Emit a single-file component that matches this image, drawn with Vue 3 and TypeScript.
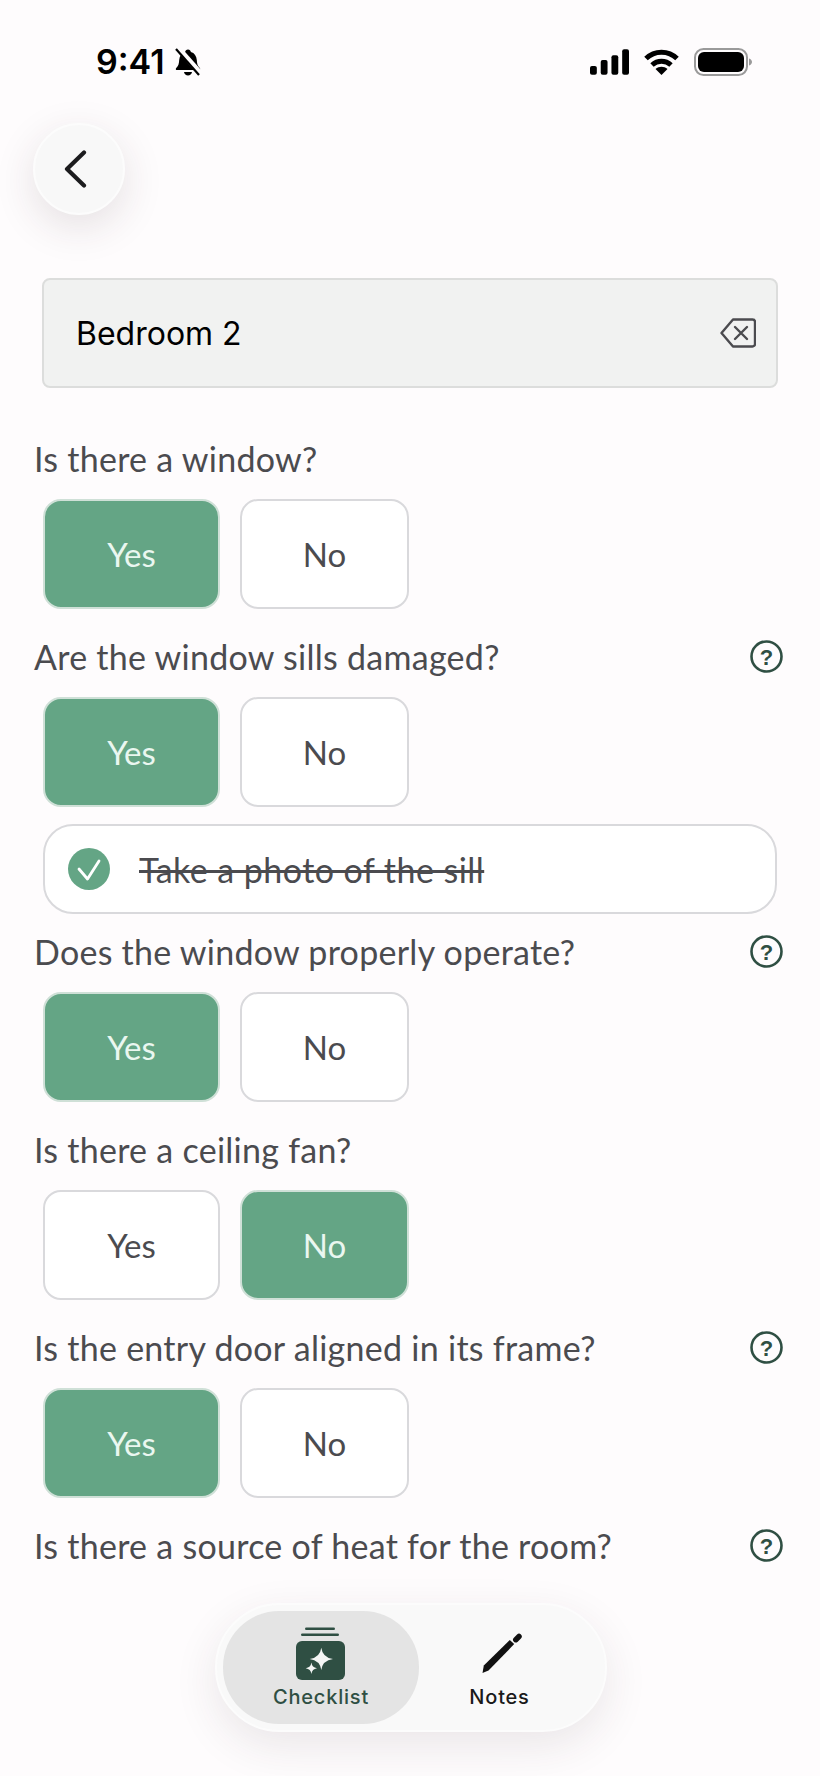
<script setup lang="ts">
interface Question {
  label: string
  answer: 'yes' | 'no' | null
  help: boolean
  task?: string
}

const questions: Question[] = [
  { label: 'Is there a window?', answer: 'yes', help: false },
  { label: 'Are the window sills damaged?', answer: 'yes', help: true, task: 'Take a photo of the sill' },
  { label: 'Does the window properly operate?', answer: 'yes', help: true },
  { label: 'Is there a ceiling fan?', answer: 'no', help: false },
  { label: 'Is the entry door aligned in its frame?', answer: 'yes', help: true },
  { label: 'Is there a source of heat for the room?', answer: null, help: true },
]
</script>

<template>
  <div class="screen">
    <header class="status-bar">
      <div class="status-left">
        <span class="time">9:41</span>
        <svg class="bell" viewBox="0 0 28 28" fill="none">
          <path d="M14 1.500c1.600 0 2.600 1 2.900 2.400 3.600 1 5.600 4 5.900 8 .2 3.400.6 5.600 3 8 .8.9.4 2.100-.9 2.100H3.100c-1.300 0-1.700-1.200-.9-2.100 2.400-2.400 2.800-4.600 3-8 .3-4 2.300-7 5.900-8C11.400 2.500 12.400 1.500 14 1.500z" fill="#000"/>
          <path d="M10 24h8c-.3 2-2 3.500-4 3.500S10.300 26 10 24z" fill="#000"/>
          <path d="M3.500 -.5l24 27" stroke="#fefcfd" stroke-width="5.500"/>
          <path d="M2 1l23 26" stroke="#000" stroke-width="2.200"/>
        </svg>
      </div>
      <div class="status-right">
        <svg class="signal" viewBox="0 0 40 26" fill="#000">
          <rect x="0" y="17" width="7" height="9" rx="2"/>
          <rect x="11" y="11" width="7" height="15" rx="2"/>
          <rect x="22" y="6" width="7" height="20" rx="2"/>
          <rect x="33" y="0" width="7" height="26" rx="2"/>
        </svg>
        <svg class="wifi" viewBox="0 0 35 26" fill="none" stroke="#000" stroke-width="5">
          <path d="M2 9.500C10.500 1 24.500 1 33 9.500"/>
          <path d="M8 16c5.500-5 13.500-5 19 0"/>
          <path d="M17.500 26l-6-6c3.500-3 8.500-3 12 0z" fill="#000" stroke="none"/>
        </svg>
        <svg class="battery" viewBox="0 0 58 28" fill="none">
          <rect x="1" y="1" width="52" height="26" rx="8.500" stroke="#9a9a9a" stroke-width="2"/>
          <rect x="4" y="4" width="46" height="20" rx="6" fill="#000"/>
          <path d="M55 10.500c2 .6 3 2 3 3.500s-1 2.900-3 3.500z" fill="#9a9a9a"/>
        </svg>
      </div>
    </header>

    <button class="back-btn" type="button">
      <svg viewBox="0 0 24 38" fill="none">
        <path d="M21 2.500L4 19l17 16.500" stroke="#1c1c1e" stroke-width="4.200" stroke-linecap="round" stroke-linejoin="round"/>
      </svg>
    </button>

    <main class="content">
      <div class="name-field">
        <span class="name-value">Bedroom 2</span>
        <svg class="clear-icon" viewBox="0 0 36 30" fill="none" stroke="#4b4b4f" stroke-width="2.400" stroke-linejoin="round" stroke-linecap="round">
          <path d="M13 1.500h19.500a2.500 2.500 0 0 1 2.500 2.500v22a2.500 2.500 0 0 1-2.500 2.500H13L1.500 15z"/>
          <path d="M15 9l12 12M27 9L15 21"/>
        </svg>
      </div>

      <section v-for="q in questions" :key="q.label" class="question" :class="{ 'has-task': q.task }">
        <div class="question-row">
          <span class="question-label">{{ q.label }}</span>
          <svg v-if="q.help" class="help-icon" viewBox="0 0 33 33" fill="none">
            <circle cx="16.500" cy="16.500" r="15" stroke="#2f4f43" stroke-width="2.600"/>
            <text x="16.500" y="24.500" text-anchor="middle" class="help-mark">?</text>
          </svg>
        </div>
        <div v-if="q.answer" class="answers">
          <button type="button" class="answer answer-yes" :class="{ selected: q.answer === 'yes' }">Yes</button>
          <button type="button" class="answer answer-no" :class="{ selected: q.answer === 'no' }">No</button>
        </div>
        <div v-if="q.task" class="task">
          <svg class="task-check" viewBox="0 0 42 42" fill="none">
            <circle cx="21" cy="21" r="21" fill="#64a585"/>
            <path d="M11 21l8.500 10L31 13" stroke="#fff" stroke-width="2.800" stroke-linecap="round" stroke-linejoin="round"/>
          </svg>
          <span class="task-label">{{ q.task }}</span>
        </div>
      </section>
    </main>

    <nav class="tab-bar">
      <div class="tab active">
        <svg class="tab-icon" viewBox="0 0 50 54" fill="none">
          <rect x="9" y="0.500" width="30" height="2.600" rx="1.300" fill="#2f4f43"/>
          <rect x="5" y="6.500" width="38" height="2.600" rx="1.300" fill="#2f4f43"/>
          <rect x="0" y="14" width="49" height="39" rx="6" fill="#2f4f43"/>
          <path d="M25.300 20.700Q26.500 30.500 37 32Q26.500 33.500 25.300 43Q24 33.500 13.700 32Q24 30.500 25.300 20.700z" fill="#f4f6f5"/>
          <path d="M15.400 35.500Q16 40.500 21 41.200Q16 42 15.400 47Q14.800 42 9.700 41.200Q14.800 40.500 15.400 35.500z" fill="#f4f6f5" stroke="#2f4f43" stroke-width="1.200" paint-order="stroke"/>
        </svg>
        <span class="tab-label">Checklist</span>
      </div>
      <div class="tab tab-notes">
        <svg class="tab-icon" viewBox="0 0 50 54" fill="none">
          <path d="M7.500 46L8.800 38.500 34.800 12.900 39.200 17.100 13.500 43.500z" fill="#111"/>
          <path d="M40.800 12.700L44 9.500" stroke="#111" stroke-width="5.500" stroke-linecap="round"/>
        </svg>
        <span class="tab-label">Notes</span>
      </div>
    </nav>
  </div>
</template>

<style>
html,
body {
  margin: 0;
  background: #fefcfd;
}
</style>

<style scoped>
.screen {
  position: relative;
  width: 820px;
  height: 1776px;
  overflow: hidden;
  background: #fefcfd;
  font-family: "Lato", "Noto Sans", sans-serif;
}

.status-bar {
  display: flex;
  justify-content: space-between;
  align-items: center;
  height: 28px;
  padding: 48px 68px 0 96px;
}

.status-left,
.status-right {
  display: flex;
  align-items: center;
}

.time {
  font-family: "Inter", sans-serif;
  font-size: 34px;
  font-weight: 600;
  line-height: 28px;
  color: #000;
}

.bell {
  width: 28px;
  height: 28px;
  margin-left: 9px;
}

.status-right {
  gap: 15px;
}

.signal {
  width: 39px;
  height: 26px;
}

.wifi {
  width: 35px;
  height: 26px;
}

.battery {
  width: 58px;
  height: 28px;
}

.back-btn {
  display: flex;
  align-items: center;
  justify-content: center;
  width: 92px;
  height: 92px;
  margin: 47px 0 0 33px;
  padding: 0 8px 0 0;
  background: #f8f8f8;
  border: 2px solid #fcfcfc;
  border-radius: 50%;
  box-shadow: 0 12px 40px rgba(60, 40, 50, 0.13);
}

.back-btn svg {
  width: 24px;
  height: 38px;
}

.content {
  padding: 63px 37px 0 34px;
}

.name-field {
  display: flex;
  align-items: center;
  justify-content: space-between;
  height: 106px;
  margin: 0 5px 0 8px;
  padding: 0 20px 0 32px;
  background: #f1f2f1;
  border: 2px solid #dcdddc;
  border-radius: 8px;
}

.name-value {
  font-family: "Inter", sans-serif;
  font-size: 32px;
  color: #000;
}

.clear-icon {
  width: 36px;
  height: 30px;
}

.question-row {
  display: flex;
  align-items: center;
  justify-content: space-between;
  height: 40px;
  padding-top: 27px;
  padding-bottom: 21px;
}

.question:first-of-type .question-row {
  padding-top: 50px;
}

.has-task + .question .question-row {
  padding-top: 17px;
}

.question-label {
  font-size: 34px;
  letter-spacing: 0.27px;
  color: #4b4b4f;
  white-space: nowrap;
}

.help-icon {
  width: 33px;
  height: 33px;
}

.help-mark {
  font-family: "Liberation Sans", sans-serif;
  font-size: 22px;
  font-weight: 700;
  fill: #2f4f43;
}

.answers {
  display: flex;
  gap: 20px;
  margin-left: 9px;
}

.answer {
  height: 110px;
  padding: 0;
  font-family: inherit;
  font-size: 33px;
  color: #4b4b4f;
  background: #fff;
  border: 2px solid #d9d9dc;
  border-radius: 18px;
}

.answer-yes {
  width: 177px;
}

.answer-no {
  width: 169px;
}

.answer.selected {
  color: #eaf7f0;
  background: #64a585;
  border-color: #cfe0d7;
}

.task {
  display: flex;
  align-items: center;
  gap: 29px;
  height: 86px;
  margin: 17px 6px 0 9px;
  padding-left: 23px;
  background: #fff;
  border: 2px solid #d9d9dc;
  border-radius: 30px;
}

.task-check {
  width: 42px;
  height: 42px;
}

.task-label {
  font-size: 34px;
  letter-spacing: 0.45px;
  color: #4b4b4f;
  text-decoration: line-through;
}

.tab-bar {
  position: absolute;
  left: 215px;
  top: 1603px;
  display: flex;
  box-sizing: border-box;
  width: 392px;
  height: 129px;
  padding: 6px;
  background: #f9f9f9;
  border: 2px solid #fcfcfc;
  border-radius: 65px;
  box-shadow: 0 14px 44px rgba(60, 40, 50, 0.1);
}

.tab {
  display: flex;
  flex-direction: column;
  align-items: center;
  justify-content: center;
  gap: 4px;
  border-radius: 56px;
}

.tab.active {
  width: 196px;
  background: #e4e4e4;
}

.tab-notes {
  width: 161px;
}

.tab-icon {
  width: 50px;
  height: 54px;
}

.tab-label {
  font-family: "Inter", sans-serif;
  font-size: 20px;
  font-weight: 500;
  letter-spacing: 0.8px;
  color: #1a1a1a;
}

.tab.active .tab-label {
  color: #2f4f43;
}
</style>
